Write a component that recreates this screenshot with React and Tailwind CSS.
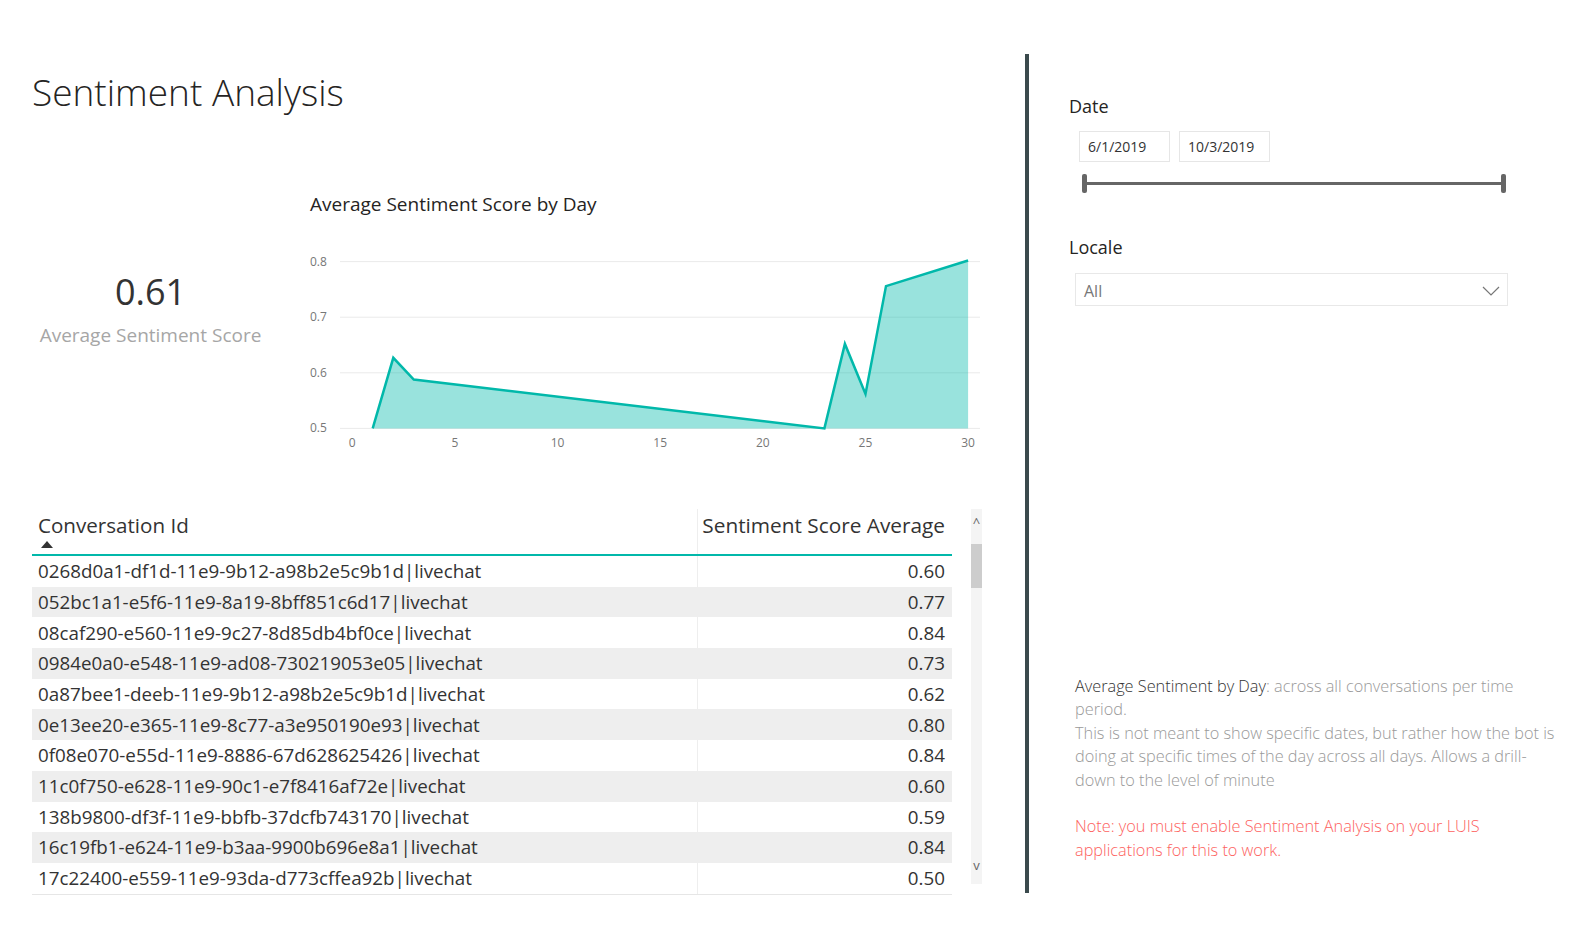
import React from 'react';

const rows = [
  ['0268d0a1-df1d-11e9-9b12-a98b2e5c9b1d|livechat', '0.60'],
  ['052bc1a1-e5f6-11e9-8a19-8bff851c6d17|livechat', '0.77'],
  ['08caf290-e560-11e9-9c27-8d85db4bf0ce|livechat', '0.84'],
  ['0984e0a0-e548-11e9-ad08-730219053e05|livechat', '0.73'],
  ['0a87bee1-deeb-11e9-9b12-a98b2e5c9b1d|livechat', '0.62'],
  ['0e13ee20-e365-11e9-8c77-a3e950190e93|livechat', '0.80'],
  ['0f08e070-e55d-11e9-8886-67d628625426|livechat', '0.84'],
  ['11c0f750-e628-11e9-90c1-e7f8416af72e|livechat', '0.60'],
  ['138b9800-df3f-11e9-bbfb-37dcfb743170|livechat', '0.59'],
  ['16c19fb1-e624-11e9-b3aa-9900b696e8a1|livechat', '0.84'],
  ['17c22400-e559-11e9-93da-d773cffea92b|livechat', '0.50'],
];

// day -> average score
const points = [
  [1, 0.5], [2, 0.627], [3, 0.588], [23, 0.5], [24, 0.652], [25, 0.562], [26, 0.756], [30, 0.802],
];

const px = (d) => 52.2 + d * 20.53;
const py = (v) => 188.4 - (v - 0.5) * 556;

const AreaChart = () => {
  const line = points.map(([d, v]) => `${px(d).toFixed(1)},${py(v).toFixed(1)}`).join(' ');
  const area = `${line} ${px(30).toFixed(1)},${py(0.5)} ${px(1).toFixed(1)},${py(0.5)}`;
  return (
    <svg width="690" height="215" className="block">
      {[0.8, 0.7, 0.6, 0.5].map((v) => (
        <g key={v}>
          <line x1="40" x2="680" y1={py(v)} y2={py(v)} stroke="#eaeaea" strokeWidth="1" />
          <text x="10" y={py(v) + 4} fontSize="12" fill="#777" fontFamily="Open Sans, sans-serif">{v.toFixed(1)}</text>
        </g>
      ))}
      <polygon points={area} fill="#01b8aa" fillOpacity="0.4" />
      <polyline points={line} fill="none" stroke="#01b8aa" strokeWidth="2.5" strokeLinejoin="miter" />
      {[0, 5, 10, 15, 20, 25, 30].map((d) => (
        <text key={d} x={px(d)} y="207" fontSize="12" fill="#777" textAnchor="middle" fontFamily="Open Sans, sans-serif">{d}</text>
      ))}
    </svg>
  );
};

const App = () => {
  return (
    <div className="w-[1596px] h-[928px] bg-white flex font-['Open_Sans','Segoe_UI',sans-serif] text-[#333]">
      {/* Left: report */}
      <div className="w-[1025px] pl-[32px] pt-[70px] flex flex-col">
        <h1 className="text-[37px] leading-[44px] font-light text-[#252423]">Sentiment Analysis</h1>

        <div className="flex mt-[78px] h-[263px]">
          <div className="w-[237px] flex flex-col items-center">
            <div className="mt-[78px] text-[36px] leading-[44px] text-[#333]">0.61</div>
            <div className="mt-[9px] text-[19px] leading-[24px] text-[#a6a6a6]">Average Sentiment Score</div>
          </div>
          <div className="ml-[31px] flex flex-col">
            <div className="pl-[10px] text-[19px] leading-[24px] text-[#252423]">Average Sentiment Score by Day</div>
            <div className="mt-[24px]">
              <AreaChart />
            </div>
          </div>
        </div>

        <div className="flex mt-[54px]">
          <div className="w-[920px] flex flex-col">
            <div className="flex h-[47px] border-b-2 border-[#01b8aa]">
              <div className="w-[665px] pl-[6px] pt-[3px] flex flex-col">
                <span className="text-[20.6px] leading-[26px] text-[#333]">Conversation Id</span>
                <span className="mt-[3px] ml-[3px] w-0 h-0 border-l-[6px] border-r-[6px] border-b-[7px] border-l-transparent border-r-transparent border-b-[#333]"></span>
              </div>
              <div className="flex-1 border-l border-[#eeeeee] pr-[7px] pt-[3px] text-right">
                <span className="text-[20.8px] leading-[26px] text-[#333]">Sentiment Score Average</span>
              </div>
            </div>
            <div className="flex flex-col border-b border-[#e6e6e6]">
              {rows.map(([id, score], i) => (
                <div key={id} className={`flex h-[30.7px] items-center text-[18.8px] text-[#333] ${i % 2 === 1 ? 'bg-[#eeeeee]' : 'bg-white'}`}>
                  <div className="w-[665px] pl-[6px] whitespace-nowrap">{id}</div>
                  <div className="flex-1 h-full flex items-center justify-end pr-[7px] border-l border-[#eeeeee]">{score}</div>
                </div>
              ))}
            </div>
          </div>
          {/* scrollbar */}
          <div className="ml-[19px] w-[11px] h-[375px] bg-[#f4f4f4] flex flex-col items-center">
            <span className="mt-[6px] text-[13px] leading-[14px] text-[#666]">^</span>
            <div className="mt-[15px] w-[11px] h-[44px] bg-[#cdcdcd]"></div>
            <span className="mt-auto mb-[12px] text-[13px] leading-[14px] text-[#666]">v</span>
          </div>
        </div>
      </div>

      {/* divider */}
      <div className="w-[4px] mt-[54px] h-[839px] bg-[#3b4a4d]"></div>

      {/* Right: filters */}
      <div className="flex-1 pl-[40px] pt-[94px] flex flex-col">
        <div className="text-[18px] leading-[24px] text-[#252423]">Date</div>
        <div className="flex gap-[9px] ml-[10px] mt-[13px]">
          <div className="w-[91px] h-[31px] border border-[#e6e6e6] pl-[8px] flex items-center text-[14px] text-[#333]">6/1/2019</div>
          <div className="w-[91px] h-[31px] border border-[#e6e6e6] pl-[8px] flex items-center text-[14px] text-[#333]">10/3/2019</div>
        </div>
        <div className="ml-[13px] mt-[10px] w-[424px] h-[22px] flex items-center">
          <div className="w-[5px] h-[19px] rounded-[2px] bg-[#666]"></div>
          <div className="flex-1 h-[3px] bg-[#666]"></div>
          <div className="w-[5px] h-[19px] rounded-[2px] bg-[#666]"></div>
        </div>

        <div className="mt-[41px] text-[18px] leading-[24px] text-[#252423]">Locale</div>
        <div className="ml-[6px] mt-[14px] w-[433px] h-[33px] border border-[#e8e8e8] pl-[8px] pr-[7px] pt-[3px] flex items-center justify-between">
          <span className="text-[16px] text-[#777]">All</span>
          <svg width="18" height="10" viewBox="0 0 18 10">
            <polyline points="1,1 9,9 17,1" fill="none" stroke="#777" strokeWidth="1.2" />
          </svg>
        </div>

        <div className="ml-[6px] mt-[369px] text-[16.3px] leading-[23.4px] font-light text-[#999] whitespace-nowrap">
          <div><span className="text-[#333]">Average Sentiment by Day</span>: across all conversations per time</div>
          <div>period.</div>
          <div>This is not meant to show specific dates, but rather how the bot is</div>
          <div>doing at specific times of the day across all days. Allows a drill-</div>
          <div>down to the level of minute</div>
          <div className="mt-[23.4px] text-[#fd625e]">Note: you must enable Sentiment Analysis on your LUIS</div>
          <div className="text-[#fd625e]">applications for this to work.</div>
        </div>
      </div>
    </div>
  );
};

export default App;
